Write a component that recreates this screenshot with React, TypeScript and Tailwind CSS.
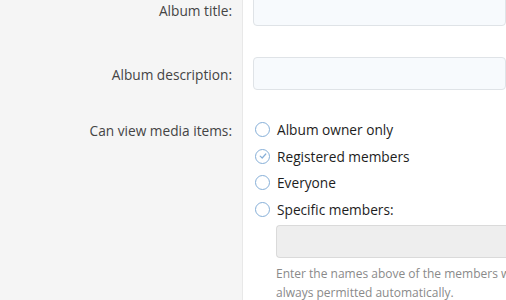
import React from "react";

function Radio({ label, checked }: { label: string; checked?: boolean }) {
  return (
    <li className="flex h-[26.4px] items-center">
      <span className="ml-[2px] mr-[7px] flex h-[15px] w-[15px] items-center justify-center rounded-full border-[1.6px] border-[#86afd8] bg-white">
        {checked && (
          <svg viewBox="0 0 10 10" className="h-[8px] w-[8px]" fill="none">
            <path d="M1.5 5.2 L4 7.5 L8.5 2.5" stroke="#86afd8" strokeWidth="1.5" strokeLinecap="round" strokeLinejoin="round" />
          </svg>
        )}
      </span>
      <span className="text-[#1d1d1d]">{label}</span>
    </li>
  );
}

export default function App() {
  return (
    <div
      className="-mt-[7px] h-[307px] overflow-hidden bg-white text-[13.7px] leading-[19px]"
      style={{ fontFamily: '"Open Sans", "Liberation Sans", sans-serif' }}
    >
      {/* Album title */}
      <div className="flex">
        <div className="w-[243px] shrink-0 border-r border-[#e8e8e8] bg-[#f5f5f5] pr-[10px] pt-[8px] text-right text-[#444444]">
          Album title:
        </div>
        <div className="flex-1 pl-[10px]">
          <div className="h-[33px] rounded-[4px] border border-[#dfe3e7] bg-[#f7fafd]" />
        </div>
      </div>

      {/* Album description */}
      <div className="flex">
        <div className="w-[243px] shrink-0 border-r border-[#e8e8e8] bg-[#f5f5f5] pr-[10px] pt-[39px] text-right text-[#444444]">
          Album description:
        </div>
        <div className="flex-1 pl-[10px] pt-[31px]">
          <div className="h-[33px] rounded-[4px] border border-[#dfe3e7] bg-[#f7fafd]" />
        </div>
      </div>

      {/* Can view media items */}
      <div className="flex">
        <div className="w-[243px] shrink-0 border-r border-[#e8e8e8] bg-[#f5f5f5] pr-[10px] pt-[30.5px] text-right text-[#444444]">
          Can view media items:
        </div>
        <div className="min-w-0 flex-1 pl-[10px] pt-[26.8px] pb-[20px]">
          <ul>
            <Radio label="Album owner only" />
            <Radio label="Registered members" checked />
            <Radio label="Everyone" />
            <Radio label="Specific members:" />
          </ul>
          <div className="ml-[23px] mt-[3px] overflow-hidden">
            <div className="h-[33px] rounded-l-[4px] border border-r-0 border-[#dadada] bg-[#eeeeee]" />
            <p className="mt-[5.5px] whitespace-nowrap text-[12px] leading-[19px] text-[#8a8a8a]">
              Enter the names above of the members who may view the media items in this album. You are
              <br />
              always permitted automatically.
            </p>
          </div>
        </div>
      </div>
    </div>
  );
}
